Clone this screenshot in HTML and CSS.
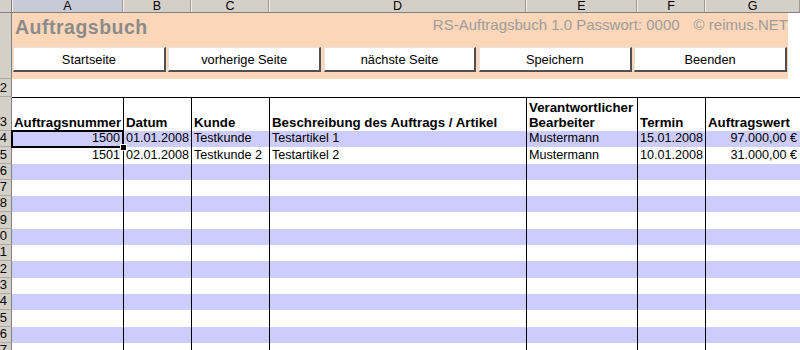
FILE: index.html
```html
<!DOCTYPE html>
<html lang="de">
  <head>
    <meta charset="UTF-8" />
    <title>Auftragsbuch</title>
    <link rel="stylesheet" href="styles.css">
  </head>
  <body>
    <div class="sheet">
      <div class="row colheads">
        <div class="corner"></div>
        <div class="colhead active">A</div>
        <div class="colhead">B</div>
        <div class="colhead">C</div>
        <div class="colhead">D</div>
        <div class="colhead">E</div>
        <div class="colhead">F</div>
        <div class="colhead">G</div>
      </div>

      <div class="row banner-row">
        <div class="rowhead"></div>
        <div class="banner">
          <div class="banner-top">
            <span class="title">Auftragsbuch</span>
            <span class="info">RS-Auftragsbuch 1.0 Passwort: 0000<span class="copy">© reimus.NET</span></span>
          </div>
          <div class="buttons">
            <button>Startseite</button>
            <button>vorherige Seite</button>
            <button>nächste Seite</button>
            <button>Speichern</button>
            <button>Beenden</button>
          </div>
        </div>
      </div>

      <div class="row spacer">
        <div class="rowhead"><span>2</span></div>
        <div class="blank"></div>
      </div>

      <div class="row head">
        <div class="rowhead"><span>3</span></div>
        <div class="cell">Auftragsnummer</div>
        <div class="cell">Datum</div>
        <div class="cell">Kunde</div>
        <div class="cell">Beschreibung des Auftrags / Artikel</div>
        <div class="cell">Verantwortlicher<br>Bearbeiter</div>
        <div class="cell">Termin</div>
        <div class="cell">Auftragswert</div>
      </div>

      <div class="row data blue">
        <div class="rowhead"><span>4</span></div>
        <div class="cell num sel">1500</div>
        <div class="cell">01.01.2008</div>
        <div class="cell">Testkunde</div>
        <div class="cell">Testartikel 1</div>
        <div class="cell">Mustermann</div>
        <div class="cell">15.01.2008</div>
        <div class="cell num">97.000,00 €</div>
      </div>
      <div class="row data">
        <div class="rowhead"><span>5</span></div>
        <div class="cell num">1501</div>
        <div class="cell">02.01.2008</div>
        <div class="cell">Testkunde 2</div>
        <div class="cell">Testartikel 2</div>
        <div class="cell">Mustermann</div>
        <div class="cell">10.01.2008</div>
        <div class="cell num">31.000,00 €</div>
      </div>
      <div class="row data blue">
        <div class="rowhead"><span>6</span></div>
        <div class="cell"></div><div class="cell"></div><div class="cell"></div><div class="cell"></div><div class="cell"></div><div class="cell"></div><div class="cell"></div>
      </div>
      <div class="row data">
        <div class="rowhead"><span>7</span></div>
        <div class="cell"></div><div class="cell"></div><div class="cell"></div><div class="cell"></div><div class="cell"></div><div class="cell"></div><div class="cell"></div>
      </div>
      <div class="row data blue">
        <div class="rowhead"><span>8</span></div>
        <div class="cell"></div><div class="cell"></div><div class="cell"></div><div class="cell"></div><div class="cell"></div><div class="cell"></div><div class="cell"></div>
      </div>
      <div class="row data">
        <div class="rowhead"><span>9</span></div>
        <div class="cell"></div><div class="cell"></div><div class="cell"></div><div class="cell"></div><div class="cell"></div><div class="cell"></div><div class="cell"></div>
      </div>
      <div class="row data blue">
        <div class="rowhead"><span>10</span></div>
        <div class="cell"></div><div class="cell"></div><div class="cell"></div><div class="cell"></div><div class="cell"></div><div class="cell"></div><div class="cell"></div>
      </div>
      <div class="row data">
        <div class="rowhead"><span>11</span></div>
        <div class="cell"></div><div class="cell"></div><div class="cell"></div><div class="cell"></div><div class="cell"></div><div class="cell"></div><div class="cell"></div>
      </div>
      <div class="row data blue">
        <div class="rowhead"><span>12</span></div>
        <div class="cell"></div><div class="cell"></div><div class="cell"></div><div class="cell"></div><div class="cell"></div><div class="cell"></div><div class="cell"></div>
      </div>
      <div class="row data">
        <div class="rowhead"><span>13</span></div>
        <div class="cell"></div><div class="cell"></div><div class="cell"></div><div class="cell"></div><div class="cell"></div><div class="cell"></div><div class="cell"></div>
      </div>
      <div class="row data blue">
        <div class="rowhead"><span>14</span></div>
        <div class="cell"></div><div class="cell"></div><div class="cell"></div><div class="cell"></div><div class="cell"></div><div class="cell"></div><div class="cell"></div>
      </div>
      <div class="row data">
        <div class="rowhead"><span>15</span></div>
        <div class="cell"></div><div class="cell"></div><div class="cell"></div><div class="cell"></div><div class="cell"></div><div class="cell"></div><div class="cell"></div>
      </div>
      <div class="row data blue">
        <div class="rowhead"><span>16</span></div>
        <div class="cell"></div><div class="cell"></div><div class="cell"></div><div class="cell"></div><div class="cell"></div><div class="cell"></div><div class="cell"></div>
      </div>
      <div class="row data">
        <div class="rowhead"><span>17</span></div>
        <div class="cell"></div><div class="cell"></div><div class="cell"></div><div class="cell"></div><div class="cell"></div><div class="cell"></div><div class="cell"></div>
      </div>
    </div>
  </body>
</html>
```

FILE: styles.css
```css
* {
  box-sizing: border-box;
}
body {
  margin: 0;
  padding: 0;
  background-color: #ffffff;
  color: #000000;
  font-family: "Liberation Sans", Arial, sans-serif;
  font-size: 12.6px;
  overflow: hidden;
}
.sheet {
  width: 800px;
  height: 350px;
  overflow: hidden;
}
.row {
  display: grid;
  grid-template-columns: 12px 111px 68px 78px 257px 111px 68px 95px;
}

/* column letters */
.colheads {
  height: 13px;
  background-color: #d4d0c8;
  border-bottom: 1px solid #808080;
}
.corner {
  border-right: 1px solid #808080;
}
.colhead {
  text-align: center;
  line-height: 12px;
  font-size: 12.5px;
  border-right: 1px solid #9c9a94;
  border-left: 1px solid #f0eee8;
}
.colhead.active {
  background-color: #c8cbd6;
}

/* row numbers */
.rowhead {
  background-color: #d4d0c8;
  border-right: 1px solid #808080;
  border-bottom: 1px solid #aeaba4;
  display: flex;
  justify-content: flex-end;
  align-items: flex-end;
  padding-right: 4px;
  padding-bottom: 1px;
  overflow: hidden;
  white-space: nowrap;
  font-size: 13px;
  line-height: 15px;
}

/* peach banner */
.banner-row {
  height: 66px;
}
.banner {
  grid-column: 2 / -1;
  margin-right: 12px;
  background-color: #fbd6b9;
  display: flex;
  flex-direction: column;
}
.banner-top {
  height: 34px;
  display: flex;
  justify-content: space-between;
  align-items: flex-start;
  padding: 2px 0 0 3px;
}
.title {
  margin-top: 1px;
  font-size: 19.5px;
  line-height: 22px;
  font-weight: bold;
  letter-spacing: 0.5px;
  color: #8b8b8b;
}
.info {
  margin-top: 1px;
  font-size: 15px;
  line-height: 17px;
  color: #a09c9a;
}
.copy {
  margin-left: 14px;
}
.buttons {
  display: flex;
  gap: 2.5px;
  padding: 0 1px;
}
.buttons button {
  flex: 1;
  height: 25px;
  margin: 0;
  padding: 0;
  background-color: #ffffff;
  border-top: 1px solid #e4e2dc;
  border-left: 1px solid #e4e2dc;
  border-right: 2px solid #505050;
  border-bottom: 2px solid #505050;
  font-family: "Liberation Sans", Arial, sans-serif;
  font-size: 12.8px;
  color: #000000;
}

/* empty row 2 */
.spacer {
  height: 18px;
}
.blank {
  grid-column: 2 / -1;
}

/* table */
.head {
  height: 34px;
}
.data {
  height: 16.3px;
}
.cell {
  display: flex;
  align-items: flex-end;
  padding: 0 3px 1px 2px;
  line-height: 15px;
  white-space: nowrap;
  overflow: hidden;
}
.cell + .cell {
  border-left: 1px solid #000000;
}
.head .cell {
  border-top: 1px solid #000000;
  font-size: 13.3px;
  font-weight: bold;
}
.blue .cell {
  background-color: #ccccff;
}
.num {
  justify-content: flex-end;
}
.sel {
  position: relative;
  overflow: visible;
  outline: 2px solid #000000;
  outline-offset: -1px;
}
.sel::after {
  content: "";
  position: absolute;
  right: -4px;
  bottom: -4px;
  width: 5px;
  height: 5px;
  background-color: #000000;
  border: 1px solid #ffffff;
}
```
